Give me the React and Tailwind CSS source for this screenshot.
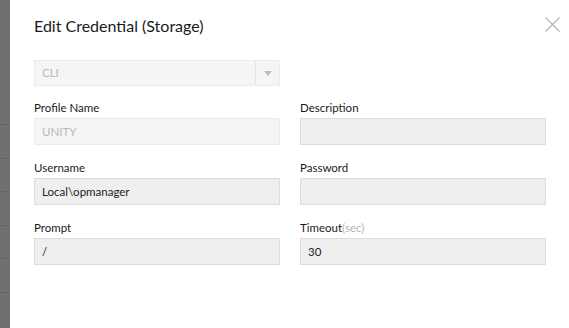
import React from 'react';

const Field = ({ label, hint, value, disabled }) => (
  <div className="flex flex-col">
    <label className="text-[11.5px] leading-[15px] text-[#1a1a1a] mb-[3px]">
      {label}
      {hint && <span className="text-[#b5b5b5]">{hint}</span>}
    </label>
    <div
      className={`h-[27px] border flex items-center px-[7px] text-[11.5px] ${
        disabled ? 'bg-[#f5f5f5] border-[#ebebeb] text-[#b8b8b8]' : 'bg-[#efefef] border-[#dcdcdc] text-[#222]'
      }`}
    >
      {value}
    </div>
  </div>
);

export default function App() {
  return (
    <div className="flex w-[569px] h-[328px] bg-white overflow-hidden" style={{ fontFamily: 'Lato, "Open Sans", sans-serif' }}>
      <div className="w-[10px] h-full bg-[#707070] flex flex-col">
        <div className="h-[124px]" />
        {[0, 1, 2, 3, 4, 5].map((i) => (
          <div key={i} className="h-[33.5px] border-t border-[#646464]" />
        ))}
      </div>

      <div className="flex-1 relative pl-[24px] pr-[23px]">
        <h1 className="mt-[16px] text-[16px] leading-[20px] text-[#1a1a1a]">Edit Credential (Storage)</h1>
        <button className="absolute top-[17px] right-[9px] w-[15px] h-[15px]">
          <svg viewBox="0 0 15 15" width="15" height="15">
            <path d="M0.5 0.5 L14.5 14.5 M14.5 0.5 L0.5 14.5" stroke="#b5b5b5" strokeWidth="1.2" fill="none" />
          </svg>
        </button>

        <div className="mt-[24px] w-[246px] h-[26px] flex border border-[#ebebeb] bg-[#f5f5f5] text-[11.5px] text-[#b8b8b8]">
          <div className="flex-1 flex items-center px-[7px]">CLI</div>
          <div className="w-[24px] border-l border-[#e6e6e6] flex items-center justify-center">
            <svg viewBox="0 0 8 5" width="8" height="5">
              <path d="M0 0 L8 0 L4 5 Z" fill="#bdbdbd" />
            </svg>
          </div>
        </div>

        <div className="mt-[14px] grid grid-cols-[246px_246px] gap-x-[20px] gap-y-[15px]">
          <Field label="Profile Name" value="UNITY" disabled />
          <Field label="Description" value="" />
          <Field label="Username" value="Local\opmanager" />
          <Field label="Password" value="" />
          <Field label="Prompt" value="/" />
          <Field label="Timeout" hint="(sec)" value="30" />
        </div>
      </div>
    </div>
  );
}
